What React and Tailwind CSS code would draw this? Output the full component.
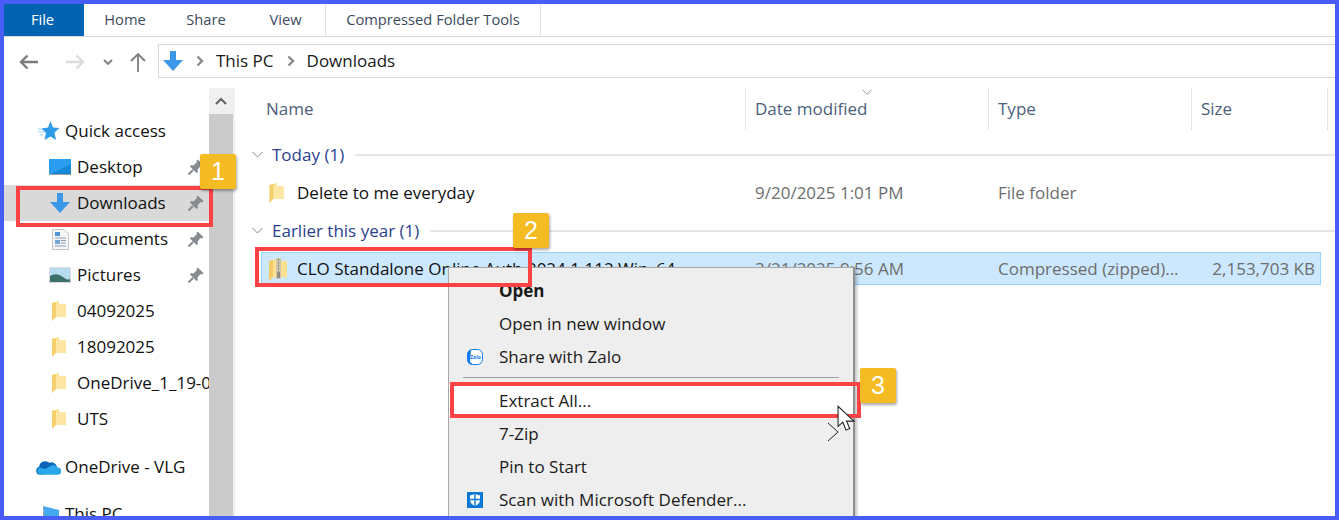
import React from 'react';

const FONT = { fontFamily: '"Open Sans", "Noto Sans", sans-serif' };

const Folder = ({ className }) => (
  <svg viewBox="0 0 14 20" className={className}>
    <path d="M0 2 L7 0 L7 3 L14 3 L14 16 L3 16 L0 20 Z" fill="#fbe08f" />
    <path d="M0 2 L4 1 L4 16 L0 20 Z" fill="#f4cf6e" />
    <path d="M4 3 H14 V16 H4 Z" fill="#fde7a3" />
  </svg>
);

const ZipFolder = ({ className }) => (
  <svg viewBox="0 0 18 24" className={className}>
    <path d="M0 4 L10 1 L10 4 L18 4 L18 20 L4 20 L0 24 Z" fill="#fbe08f" />
    <path d="M0 4 L4 3 L4 20 L0 24 Z" fill="#f2ca68" />
    <rect x="7" y="1" width="5" height="21" fill="#cfc8ae" />
    <path d="M9.5 2 V15" stroke="#8a8572" strokeWidth="1.2" strokeDasharray="1.5 1.5" />
    <rect x="8" y="15" width="3" height="6" fill="#8f8b7d" />
  </svg>
);

const Pin = ({ className }) => (
  <svg viewBox="0 0 16 16" className={className}>
    <path d="M9.5 0.5 L15.5 6 L14 7.5 L12.5 7 L9.5 10.5 L10 13 L8.5 14 L2 7.5 L3 6 L5.5 6.5 L9 3 L8.5 1.5 Z" fill="#858b90" />
    <path d="M5 11 L0.5 15.5" stroke="#858b90" strokeWidth="2" />
  </svg>
);

const DownArrow = ({ className }) => (
  <svg viewBox="0 0 20 20" className={className}>
    <path d="M7 0 H13 V9 H20 L10 20 L0 9 H7 Z" fill="#3b97e8" />
  </svg>
);

const Star = ({ className }) => (
  <svg viewBox="0 0 22 20" className={className}>
    <path d="M13 0 L15.5 6.5 L22 7 L17 11.5 L18.5 19 L13 15.5 L7 19 L8.5 12 L4 7.5 L10.5 6.5 Z" fill="#2f9ae8" />
    <path d="M0 8 H5 M1 11 H7 M2 14 H6" stroke="#9fd2f5" strokeWidth="1" />
  </svg>
);

const Desktop = ({ className }) => (
  <svg viewBox="0 0 22 16" className={className}>
    <rect width="22" height="16" fill="#2a9df0" />
    <path d="M0 16 L22 5 V16 Z" fill="#1787d8" />
    <rect y="15" width="22" height="1" fill="#9a9a9a" />
  </svg>
);

const Documents = ({ className }) => (
  <svg viewBox="0 0 17 21" className={className}>
    <path d="M.5 .5 H12 L16.5 5 V20.5 H.5 Z" fill="#f6f6f6" stroke="#c5c5c5" />
    <rect x="3" y="3" width="5" height="4" fill="#4f96d8" />
    <path d="M3 9 H14 M9 11.5 H14 M9 14 H14 M3 17 H14" stroke="#8aa0b5" />
    <rect x="3" y="11" width="5" height="4" fill="#6fa8d8" />
  </svg>
);

const Pictures = ({ className }) => (
  <svg viewBox="0 0 22 16" className={className}>
    <rect width="22" height="16" fill="#dcdcdc" />
    <rect x="1" y="1" width="20" height="14" fill="#b5dcf0" />
    <path d="M1 9 Q8 5 14 10 T21 11 V15 H1 Z" fill="#3d6f6a" />
  </svg>
);

const OneDrive = ({ className }) => (
  <svg viewBox="0 0 24 15" className={className}>
    <path d="M4 15 A4 4 0 0 1 3 7.2 A6 6 0 0 1 13 3.5 A5 5 0 0 1 20 7 L10 14 Z" fill="#0c64b8" />
    <path d="M4.5 15 H20.5 A3.5 3.5 0 0 0 21 8 A5 5 0 0 0 14 6.5 L9 9.5 L3 8 A4 4 0 0 0 4.5 15 Z" fill="#28a8ea" />
  </svg>
);

const ThisPC = ({ className }) => (
  <svg viewBox="0 0 16 16" className={className}>
    <path d="M0 0 L16 4 V16 H2 Z" fill="#45a9ef" />
    <path d="M0 0 L2 16 H0 Z" fill="#8a9aa8" />
  </svg>
);

const Zalo = ({ className }) => (
  <svg viewBox="0 0 16 16" className={className}>
    <rect x="0.5" y="0.5" width="15" height="15" rx="5" fill="#fff" stroke="#0f7af0" />
    <path d="M.5 11 V5.5 A5 5 0 0 1 4 .8 L3 13 L6 15.5 H5 A5 5 0 0 1 .5 11 Z" fill="#0f7af0" />
    <text x="8.5" y="9.8" fontSize="5" fontWeight="700" fill="#0f7af0" textAnchor="middle" fontFamily="Open Sans">Zalo</text>
  </svg>
);

const Shield = ({ className }) => (
  <svg viewBox="0 0 16 16" className={className}>
    <rect width="16" height="16" fill="#0a78d4" />
    <path d="M8 2 L13 3.5 V8 C13 11 10.5 13 8 14 C5.5 13 3 11 3 8 V3.5 Z" fill="#fff" />
    <path d="M8 2 V14 M3 7.5 H13" stroke="#0a78d4" strokeWidth="1.4" />
  </svg>
);

const Chevron = ({ className }) => (
  <svg viewBox="0 0 12 8" className={className} fill="none" stroke="#7a8694" strokeWidth="1">
    <path d="M1 1 L6 6 L11 1" />
  </svg>
);

const Crumb = () => (
  <svg viewBox="0 0 8 12" className="w-[8px] h-[12px]" fill="none" stroke="#8a8a8a" strokeWidth="2.4">
    <path d="M1.5 1.5 L6 6 L1.5 10.5" />
  </svg>
);

const Arrow = ({ color, rotate }) => (
  <svg viewBox="0 0 20 16" className={`w-[20px] h-[16px] ${rotate}`} fill="none" stroke={color} strokeWidth="2.4">
    <path d="M19 8 H2 M8.5 1.5 L2 8 L8.5 14.5" />
  </svg>
);

const pinned = [
  { name: 'Desktop', icon: <Desktop className="w-[22px] h-[16px] ml-[45px]" /> },
  { name: 'Downloads', icon: <DownArrow className="w-[20px] h-[20px] ml-[46px]" />, active: true },
  { name: 'Documents', icon: <Documents className="w-[17px] h-[21px] ml-[48px]" /> },
  { name: 'Pictures', icon: <Pictures className="w-[22px] h-[16px] ml-[45px]" /> },
];

const folders = ['04092025', '18092025', 'OneDrive_1_19-09-2025', 'UTS'];

const SidebarRow = ({ icon, name, active, pin }) => (
  <div className={`flex items-center h-[36px] ${active ? 'bg-[#d9d9d9]' : ''}`}>
    <div className="w-[73px] shrink-0 flex items-center">{icon}</div>
    <span className="flex-1 min-w-0 overflow-hidden whitespace-nowrap text-[17px] text-[#111]">{name}</span>
    {pin && <Pin className="w-[16px] h-[16px] shrink-0 mr-[5px]" />}
  </div>
);

const Sidebar = () => (
  <div className="w-[205px] shrink-0 pt-[25px] overflow-hidden">
    <div className="flex items-center h-[36px] pl-[32px]">
      <Star className="w-[25px] h-[20px]" />
      <span className="ml-[4px] text-[17px] text-[#111]">Quick access</span>
    </div>
    {pinned.map((p) => (
      <SidebarRow key={p.name} icon={p.icon} name={p.name} active={p.active} pin />
    ))}
    {folders.map((f) => (
      <SidebarRow key={f} icon={<Folder className="w-[14px] h-[20px] ml-[48px]" />} name={f} />
    ))}
    <div className="flex items-center h-[36px] pl-[32px] mt-[12px]">
      <OneDrive className="w-[25px] h-[16px]" />
      <span className="ml-[4px] text-[17px] text-[#111]">OneDrive - VLG</span>
    </div>
    <div className="flex items-center h-[36px] pl-[39px] mt-[11px]">
      <ThisPC className="w-[16px] h-[16px]" />
      <span className="ml-[6px] text-[17px] text-[#111]">This PC</span>
    </div>
  </div>
);

const Scrollbar = () => (
  <div className="w-[24px] shrink-0 flex flex-col bg-[#cbcbcb]">
    <div className="h-[26px] bg-[#f0f0f0] flex items-center justify-center">
      <svg viewBox="0 0 12 8" className="w-[12px] h-[8px]" fill="none" stroke="#606060" strokeWidth="2">
        <path d="M1 7 L6 2 L11 7" />
      </svg>
    </div>
  </div>
);

const GroupHeader = ({ label, count }) => (
  <div className="flex items-center h-[38px] pl-[15px]">
    <Chevron className="w-[13px] h-[8px]" />
    <span className="ml-[8px] text-[17px] text-[#2b3f8f] whitespace-nowrap">{label} ({count})</span>
    <div className="flex-1 h-[2px] bg-[#e6e6e6] ml-[11px]" />
  </div>
);

const headers = [
  { name: 'Name', w: 'w-[509px]', pl: 'pl-[30px]' },
  { name: 'Date modified', w: 'w-[243px]', pl: 'pl-[9px]' },
  { name: 'Type', w: 'w-[203px]', pl: 'pl-[9px]' },
  { name: 'Size', w: 'w-[136px]', pl: 'pl-[9px]' },
];

const FileList = () => (
  <div className="flex-1 min-w-0 ml-[1px]">
    <div className="relative flex h-[42px]">
      {headers.map((h, i) => (
        <div key={h.name} className={`${h.w} ${h.pl} shrink-0 flex items-center text-[17px] text-[#4c607a] ${i > 0 ? 'border-l border-[#e5e5e5]' : ''}`}>
          {h.name}
        </div>
      ))}
      <div className="border-l border-[#e5e5e5]" />
      <Chevron className="absolute left-[625px] top-[1px] w-[12px] h-[7px]" />
    </div>
    <div className="pt-[6px]">
      <GroupHeader label="Today" count={1} />
      <div className="flex items-center h-[38px] text-[17px]">
        <div className="w-[509px] shrink-0 flex items-center pl-[33px]">
          <Folder className="w-[15px] h-[20px]" />
          <span className="ml-[13px] text-[#111]">Delete to me everyday</span>
        </div>
        <span className="w-[243px] shrink-0 pl-[10px] text-[#6d6d6d]">9/20/2025 1:01 PM</span>
        <span className="w-[203px] shrink-0 pl-[10px] text-[#6d6d6d]">File folder</span>
      </div>
      <GroupHeader label="Earlier this year" count={1} />
      <div className="flex items-center h-[33px] mt-[2px] ml-[25px] mr-[14px] bg-[#cce8ff] border border-[#99d1ff] text-[17px]">
        <div className="w-[483px] shrink-0 flex items-center pl-[7px] overflow-hidden whitespace-nowrap">
          <ZipFolder className="w-[18px] h-[24px] shrink-0" />
          <span className="ml-[10px] text-[#111]">CLO Standalone Online Auth 2024.1.112 Win_64</span>
        </div>
        <span className="w-[243px] shrink-0 pl-[10px] text-[#6d6d6d]">3/21/2025 9:56 AM</span>
        <span className="w-[203px] shrink-0 pl-[10px] text-[#6d6d6d] whitespace-nowrap">Compressed (zipped)...</span>
        <span className="flex-1 text-right pr-[5px] text-[#6d6d6d] whitespace-nowrap">2,153,703 KB</span>
      </div>
    </div>
  </div>
);

const MenuItem = ({ children, icon, bold, h = 'h-[33px]' }) => (
  <div className={`flex items-center ${h} text-[17px] text-[#1a1a1a] ${bold ? 'font-bold' : ''}`}>
    <div className="w-[50px] shrink-0 flex items-center pl-[18px]">{icon}</div>
    {children}
  </div>
);

const ContextMenu = () => (
  <div className="absolute left-[444px] top-[263px] w-[407px] h-[260px] bg-[#eeeeee] border border-[#a8a8a8] border-r-2 border-r-[#8f8f8f] shadow-[2px_2px_3px_rgba(0,0,0,0.25)] pt-[7px]">
    <MenuItem bold h="h-[32px]">Open</MenuItem>
    <MenuItem>Open in new window</MenuItem>
    <MenuItem icon={<Zalo className="w-[16px] h-[16px]" />}>Share with Zalo</MenuItem>
    <div className="h-px bg-[#a0a0a0] ml-[14px] mr-[14px] mt-[4px] mb-[6px]" />
    <div className="bg-white">
      <MenuItem>Extract All...</MenuItem>
    </div>
    <div className="relative">
      <MenuItem>7-Zip</MenuItem>
      <svg viewBox="0 0 12 20" className="absolute right-[14px] top-[5px] w-[12px] h-[20px]" fill="none" stroke="#222" strokeWidth="1">
        <path d="M1 1 L11 10 L1 19" />
      </svg>
    </div>
    <MenuItem>Pin to Start</MenuItem>
    <MenuItem icon={<Shield className="w-[16px] h-[16px]" />}>Scan with Microsoft Defender...</MenuItem>
  </div>
);

const marks = [
  { box: 'left-[12px] top-[182px] w-[197px] h-[41px]', badge: 'left-[196px] top-[150px]', n: 1 },
  { box: 'left-[251px] top-[243px] w-[277px] h-[40px]', badge: 'left-[509px] top-[209px]', n: 2 },
  { box: 'left-[446px] top-[378px] w-[411px] h-[36px]', badge: 'left-[856px] top-[364px]', n: 3 },
];

const Annotations = () => (
  <>
    {marks.map((m) => (
      <React.Fragment key={m.n}>
        <div className={`absolute ${m.box} border-4 border-[#fb4245]`} />
        <div className={`absolute ${m.badge} w-[36px] h-[35px] rounded-[2px] bg-[#f4bb22] shadow-[1px_2px_3px_rgba(0,0,0,0.35)] flex items-center justify-center text-white text-[25px]`} style={{ fontFamily: '"Liberation Sans", sans-serif' }}>
          {m.n}
        </div>
      </React.Fragment>
    ))}
    <svg viewBox="0 0 17 25" className="absolute left-[833px] top-[401px] w-[18px] h-[27px]">
      <path d="M1 1 V20 L5.5 16 L8.5 23.5 L12 22 L9 15 L16 15 Z" fill="#fff" stroke="#222" strokeWidth="1" />
    </svg>
  </>
);

export default function App() {
  return (
    <div className="relative w-[1339px] h-[520px] overflow-hidden border-4 border-[#4a5cf7] bg-white box-border" style={FONT}>
      <div className="flex h-[33px] border-b border-[#dcdcdc] text-[14.7px] text-[#3c4a5c]">
        <div className="w-[80px] h-[32px] pr-[3px] pb-[2px] bg-[#0063b1] text-white flex items-center justify-center">File</div>
        <div className="w-[82px] h-[32px] pb-[2px] flex items-center justify-center">Home</div>
        <div className="w-[80px] h-[32px] pb-[2px] flex items-center justify-center">Share</div>
        <div className="w-[79px] h-[32px] pb-[2px] flex items-center justify-center">View</div>
        <div className="w-[216px] h-[32px] pb-[2px] flex items-center justify-center border-x border-[#e2e2e2] whitespace-nowrap">Compressed Folder Tools</div>
      </div>

      <div className="flex items-center h-[51px] pb-[3px] pl-[15px]">
        <div className="mt-[2px]"><Arrow color="#7c7c7c" rotate="" /></div>
        <div className="ml-[26px] mt-[2px]"><Arrow color="#dcdcdc" rotate="rotate-180" /></div>
        <svg viewBox="0 0 10 6" className="ml-[18px] mt-[2px] w-[10px] h-[6px]" fill="none" stroke="#7c7c7c" strokeWidth="1.8">
          <path d="M1 1 L5 5 L9 1" />
        </svg>
        <svg viewBox="0 0 16 20" className="ml-[17px] mt-[2px] w-[16px] h-[20px]" fill="none" stroke="#7c7c7c" strokeWidth="1.8">
          <path d="M8 20 V2 M1 9 L8 2 L15 9" />
        </svg>
        <div className="ml-[12px] flex-1 h-[34px] border border-[#d9d9d9] border-r-0 flex items-center pl-[4px] text-[17px] text-[#1a1a1a]">
          <DownArrow className="w-[20px] h-[20px]" />
          <div className="ml-[13px]"><Crumb /></div>
          <span className="ml-[12px]">This PC</span>
          <div className="ml-[13px]"><Crumb /></div>
          <span className="ml-[12px]">Downloads</span>
        </div>
      </div>

      <div className="flex h-[428px] overflow-hidden">
        <Sidebar />
        <Scrollbar />
        <div className="w-[2px] bg-[#f0f0f0]" />
        <FileList />
      </div>

      <ContextMenu />
      <Annotations />
    </div>
  );
}
